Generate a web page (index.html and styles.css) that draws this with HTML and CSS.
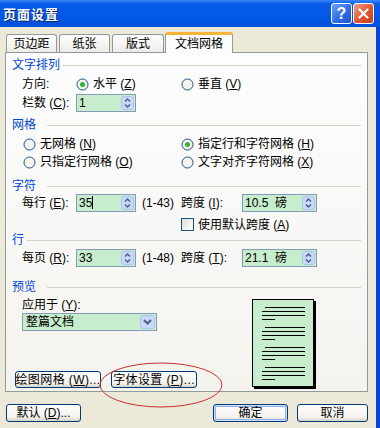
FILE: index.html
```html
<!DOCTYPE html>
<html lang="zh-CN">
<head>
  <meta charset="UTF-8" />
  <title>页面设置</title>
  <link rel="stylesheet" href="styles.css">
</head>
<body>
  <div class="dialog">
    <div class="titlebar">
      <span class="title">页面设置</span>
      <div class="caption-btns">
        <span class="cap-btn help">?</span>
        <span class="cap-btn close">
          <svg width="11" height="11" viewBox="0 0 11 11"><path d="M1.5 1.5l8 8M9.5 1.5l-8 8" stroke="#fff" stroke-width="2.2" stroke-linecap="round"/></svg>
        </span>
      </div>
    </div>

    <div class="client">
      <div class="tabs">
        <div class="tab">页边距</div>
        <div class="tab">纸张</div>
        <div class="tab wide">版式</div>
        <div class="tab active">文档网格</div>
      </div>

      <div class="panel">
        <div class="group tight">文字排列</div>
        <div class="row mt3">
          <span class="label">方向:</span>
          <span class="radio col-mid">
            <svg width="13" height="13" viewBox="0 0 13 13"><circle cx="6.5" cy="6.5" r="5.5" fill="#F4F3EE" stroke="#1C5180"/><circle cx="6.5" cy="6.5" r="2.5" fill="#31B431"/></svg>
            <span>水平 (<u>Z</u>)</span>
          </span>
          <span class="radio">
            <svg width="13" height="13" viewBox="0 0 13 13"><circle cx="6.5" cy="6.5" r="5.5" fill="#F4F3EE" stroke="#1C5180"/></svg>
            <span>垂直 (<u>V</u>)</span>
          </span>
        </div>
        <div class="row mt1">
          <span class="label">栏数 (<u>C</u>):</span>
          <span class="spin">
            <span class="val">1</span>
            <svg class="spin-btn" width="13" height="14" viewBox="0 0 13 14"><rect x="0.5" y="0.5" width="12" height="13" rx="2" fill="#C9D7FA" stroke="#B0C3F0"/><path d="M4 5.5l2.5-2.5 2.5 2.5M4 8.5l2.5 2.5 2.5-2.5" fill="none" stroke="#4D6185" stroke-width="1.5"/></svg>
          </span>
        </div>

        <div class="group mt6">网格</div>
        <div class="row grid-row mt3">
          <span class="radio col-first">
            <svg width="13" height="13" viewBox="0 0 13 13"><circle cx="6.5" cy="6.5" r="5.5" fill="#F4F3EE" stroke="#1C5180"/></svg>
            <span>无网格 (<u>N</u>)</span>
          </span>
          <span class="radio">
            <svg width="13" height="13" viewBox="0 0 13 13"><circle cx="6.5" cy="6.5" r="5.5" fill="#F4F3EE" stroke="#1C5180"/><circle cx="6.5" cy="6.5" r="2.5" fill="#31B431"/></svg>
            <span>指定行和字符网格 (<u>H</u>)</span>
          </span>
        </div>
        <div class="row grid-row">
          <span class="radio col-first">
            <svg width="13" height="13" viewBox="0 0 13 13"><circle cx="6.5" cy="6.5" r="5.5" fill="#F4F3EE" stroke="#1C5180"/></svg>
            <span>只指定行网格 (<u>O</u>)</span>
          </span>
          <span class="radio">
            <svg width="13" height="13" viewBox="0 0 13 13"><circle cx="6.5" cy="6.5" r="5.5" fill="#F4F3EE" stroke="#1C5180"/></svg>
            <span>文字对齐字符网格 (<u>X</u>)</span>
          </span>
        </div>

        <div class="group mt8">字符</div>
        <div class="row mt1">
          <span class="label">每行 (<u>E</u>):</span>
          <span class="spin">
            <span class="val">35<span class="caret"></span></span>
            <svg class="spin-btn" width="13" height="14" viewBox="0 0 13 14"><rect x="0.5" y="0.5" width="12" height="13" rx="2" fill="#C9D7FA" stroke="#B0C3F0"/><path d="M4 5.5l2.5-2.5 2.5 2.5M4 8.5l2.5 2.5 2.5-2.5" fill="none" stroke="#4D6185" stroke-width="1.5"/></svg>
          </span>
          <span class="range">(1-43)</span>
          <span class="label-pitch">跨度 (<u>I</u>):</span>
          <span class="spin wide">
            <span class="val">10.5&nbsp; 磅</span>
            <svg class="spin-btn" width="13" height="14" viewBox="0 0 13 14"><rect x="0.5" y="0.5" width="12" height="13" rx="2" fill="#C9D7FA" stroke="#B0C3F0"/><path d="M4 5.5l2.5-2.5 2.5 2.5M4 8.5l2.5 2.5 2.5-2.5" fill="none" stroke="#4D6185" stroke-width="1.5"/></svg>
          </span>
        </div>
        <div class="row check-row mt4">
          <span class="checkbox"></span>
          <span>使用默认跨度 (<u>A</u>)</span>
        </div>

        <div class="group tight">行</div>
        <div class="row mt2">
          <span class="label">每页 (<u>R</u>):</span>
          <span class="spin">
            <span class="val">33</span>
            <svg class="spin-btn" width="13" height="14" viewBox="0 0 13 14"><rect x="0.5" y="0.5" width="12" height="13" rx="2" fill="#C9D7FA" stroke="#B0C3F0"/><path d="M4 5.5l2.5-2.5 2.5 2.5M4 8.5l2.5 2.5 2.5-2.5" fill="none" stroke="#4D6185" stroke-width="1.5"/></svg>
          </span>
          <span class="range">(1-48)</span>
          <span class="label-pitch">跨度 (<u>T</u>):</span>
          <span class="spin wide">
            <span class="val">21.1&nbsp; 磅</span>
            <svg class="spin-btn" width="13" height="14" viewBox="0 0 13 14"><rect x="0.5" y="0.5" width="12" height="13" rx="2" fill="#C9D7FA" stroke="#B0C3F0"/><path d="M4 5.5l2.5-2.5 2.5 2.5M4 8.5l2.5 2.5 2.5-2.5" fill="none" stroke="#4D6185" stroke-width="1.5"/></svg>
          </span>
        </div>

        <div class="group mt13">预览</div>
        <div class="preview-area">
          <div class="apply">
            <span class="apply-label">应用于 (<u>Y</u>):</span>
            <div class="select">
              <span class="val">整篇文档</span>
              <svg width="15" height="14" viewBox="0 0 15 14"><rect x="0.5" y="0.5" width="14" height="13" rx="2" fill="#C9D7FA" stroke="#B0C3F0"/><path d="M4 5l3.5 3.5L11 5" fill="none" stroke="#4D6185" stroke-width="2"/></svg>
            </div>
            <div class="btn-row">
              <span class="btn panel-btn"><span>绘图网格 (<u>W</u>)...</span></span>
              <span class="btn panel-btn"><span>字体设置 (<u>P</u>)...</span></span>
            </div>
          </div>
          <div class="page">
            <svg width="60" height="86" viewBox="0 0 60 86">
              <g stroke="#000" stroke-width="1">
                <path d="M12 7.5h40M9 11.5h43M9 15.5h43M9 19.5h13"/>
                <path d="M12 27.5h40M9 31.5h43M9 35.5h43M9 39.5h13"/>
                <path d="M12 47.5h40M9 51.5h43M9 55.5h43M9 59.5h13"/>
                <path d="M12 67.5h40M9 71.5h43M9 75.5h43M9 79.5h13"/>
              </g>
            </svg>
          </div>
        </div>
      </div>

      <div class="footer">
        <span class="btn std"><span>默认 (<u>D</u>)...</span></span>
        <span class="btn std ok">确定</span>
        <span class="btn std cancel">取消</span>
      </div>
    </div>

    <!-- hand-drawn red mark around the font settings button -->
    <svg class="mark" width="380" height="428" viewBox="0 0 380 428">
      <ellipse cx="161" cy="385" rx="61" ry="22" fill="none" stroke="#CC2E2E" stroke-width="1"/>
    </svg>
  </div>
</body>
</html>
```

FILE: styles.css
```css
* {
  margin: 0;
  padding: 0;
  box-sizing: border-box;
}

body {
  width: 380px;
  height: 428px;
  overflow: hidden;
  font-family: "Liberation Sans", "Noto Sans CJK SC", sans-serif;
  font-size: 12px;
  color: #000;
  background: #ECE9D8;
}

u {
  text-decoration: underline;
  text-underline-offset: 1px;
}

.dialog {
  position: relative;
  width: 380px;
  height: 428px;
  display: flex;
  flex-direction: column;
}

/* title bar */
.titlebar {
  flex: none;
  height: 27px;
  display: flex;
  align-items: center;
  justify-content: space-between;
  padding: 0 6px 0 3px;
  background: linear-gradient(to bottom, #3A86F7 0, #0A5CE8 4px, #0058E6 60%, #004FD8 100%);
}

.title {
  color: #fff;
  font-weight: bold;
  font-size: 13px;
  letter-spacing: 1px;
  text-shadow: 1px 1px 0 #0A246A;
}

.caption-btns {
  display: flex;
  gap: 1px;
}

.cap-btn {
  width: 21px;
  height: 21px;
  border: 1px solid #fff;
  border-radius: 3px;
  display: flex;
  align-items: center;
  justify-content: center;
}

.help {
  background: linear-gradient(135deg, #6FA2FA, #2A66E4 60%, #1F55D0);
  color: #fff;
  font-weight: bold;
  font-size: 16px;
  line-height: 1;
}

.close {
  background: linear-gradient(135deg, #F0A088, #E0552F 55%, #C8401E);
}

/* dialog body */
.client {
  flex: 1;
  display: flex;
  flex-direction: column;
  border-right: 4px solid #0A44D6;
}

.tabs {
  height: 25px;
  display: flex;
  align-items: flex-end;
  gap: 2px;
  padding-left: 6px;
}

.tab {
  width: 51px;
  height: 18px;
  border: 1px solid #919B9C;
  border-bottom: none;
  border-radius: 3px 3px 0 0;
  background: linear-gradient(#FFFFFF, #ECEBE6);
  display: flex;
  align-items: center;
  justify-content: center;
  line-height: 1;
}

.tab.wide {
  width: 52px;
}

.tab.active {
  position: relative;
  z-index: 1;
  width: 68px;
  height: 21px;
  margin-left: -1px;
  margin-bottom: -1px;
  background: #FCFCFE;
  border-top: 3px solid #F5B53C;
  padding-bottom: 1px;
}

.panel {
  margin-left: 5px;
  width: 363px;
  height: 340px;
  border: 1px solid #919B9C;
  background: linear-gradient(#FDFDFE, #F4F3EE);
  padding: 5px 6px 0 6px;
}

.group {
  display: flex;
  align-items: center;
  height: 14px;
  line-height: 14px;
  color: #0046D5;
}

.group::after {
  content: "";
  flex: 1;
  border-top: 1px solid #D5D2C3;
  margin-left: 11px;
}

.group.tight::after {
  margin-left: 3px;
}

.mt1 { margin-top: 1px; }
.mt2 { margin-top: 2px; }
.mt3 { margin-top: 3px; }
.mt4 { margin-top: 4px; }
.mt6 { margin-top: 6px; }
.mt8 { margin-top: 8px; }
.mt13 { margin-top: 13px; }

.row {
  display: flex;
  align-items: center;
  height: 18px;
  line-height: 14px;
  padding-left: 10px;
  white-space: nowrap;
}

.label {
  width: 54px;
}

.col-mid {
  width: 105px;
}

.grid-row {
  padding-left: 11px;
}

.col-first {
  width: 158px;
}

.radio {
  display: flex;
  align-items: center;
  gap: 4px;
}

.spin {
  display: flex;
  align-items: center;
  width: 60px;
  height: 18px;
  border: 1px solid #7F9DB9;
  background: #C7EDCC;
  padding: 1px;
}

.spin.wide {
  width: 75px;
}

.val {
  flex: 1;
  padding-left: 1px;
  line-height: 14px;
}

.caret {
  display: inline-block;
  width: 1px;
  height: 13px;
  background: #000;
  vertical-align: -2px;
}

.range {
  width: 39px;
  margin-left: 6px;
}

.label-pitch {
  width: 61px;
}

.check-row {
  height: 17px;
  padding-left: 169px;
  gap: 4px;
}

.checkbox {
  width: 13px;
  height: 13px;
  border: 1px solid #1C5180;
  background: linear-gradient(135deg, #DCDCD7, #FFFFFF);
}

/* preview block */
.preview-area {
  display: flex;
}

.apply {
  width: 240px;
  display: flex;
  flex-direction: column;
  align-items: flex-start;
}

.apply-label {
  margin: 4px 0 0 10px;
  height: 14px;
  line-height: 14px;
}

.select {
  margin: 1px 0 0 10px;
  width: 135px;
  height: 18px;
  border: 1px solid #7F9DB9;
  background: #C7EDCC;
  padding: 1px;
  display: flex;
  align-items: center;
}

.select .val {
  padding-left: 2px;
}

.btn-row {
  margin-top: 40px;
  padding-left: 3px;
  display: flex;
  gap: 10px;
}

.btn {
  height: 17px;
  border: 1px solid #003C74;
  border-radius: 3px;
  background: linear-gradient(#FFFFFF, #F4F3EE 75%, #D8D2C6);
  display: flex;
  align-items: center;
  justify-content: center;
  line-height: 1;
  white-space: nowrap;
}

.panel-btn {
  width: 86px;
  letter-spacing: 0.4px;
}

.page {
  margin-top: 5px;
  width: 62px;
  height: 88px;
  border: 1px solid #000;
  background: #C7EDCC;
  box-shadow: 2px 2px 0 #000;
}

.page svg {
  display: block;
}

/* bottom buttons */
.footer {
  display: flex;
  margin-top: 12px;
  padding: 0 8px 0 6px;
}

.btn.std {
  width: 75px;
  height: 18px;
}

.ok {
  margin-left: auto;
  box-shadow: inset 0 0 0 1px #CEDFFA, inset 0 0 0 2px #8FB0EA;
}

.btn.cancel {
  width: 71px;
  margin-left: 9px;
}

.mark {
  position: absolute;
  left: 0;
  top: 0;
  pointer-events: none;
}
```
